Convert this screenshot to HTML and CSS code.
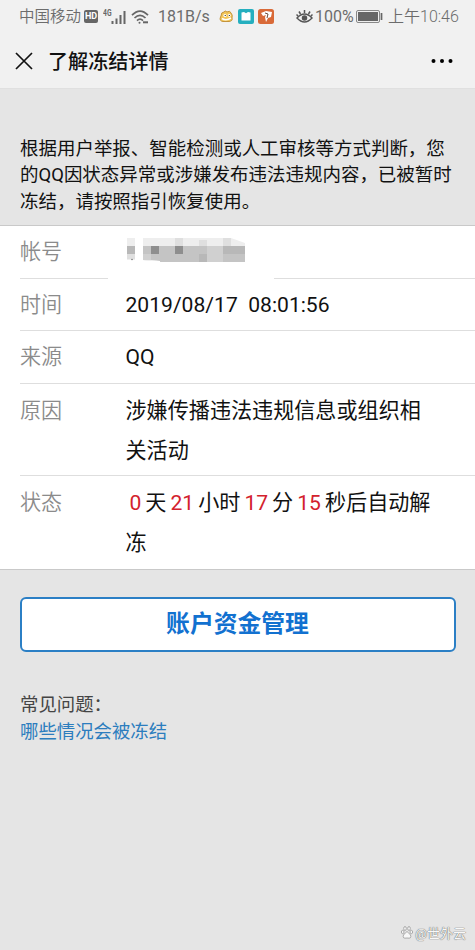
FILE: index.html
```html
<!DOCTYPE html>
<html lang="zh-CN">
<head>
<meta charset="utf-8">
<title>了解冻结详情</title>
<link rel="stylesheet" href="styles.css">
</head>
<body>
<header class="top">
  <div class="status">
    <span class="carrier">中国移动</span>
    <span class="hd">HD</span>
    <svg class="signal" width="26" height="18" viewBox="0 0 26 18"><text x="0" y="7.5" font-size="9" font-weight="700" textLength="8.5" lengthAdjust="spacingAndGlyphs">4G</text><path d="M9.500 13v3M13.500 10.500v5.500M17.500 7v9M21.500 3v13" stroke="#666" stroke-width="2"/></svg>
    <svg class="wifi" width="18" height="16" viewBox="0 0 18 16" fill="none" stroke="#666" stroke-width="1.700"><path d="M1 6.200Q9-2 17 6.200M3.500 9Q9 3.500 14.500 9M6 11.700Q9 8.700 12 11.700"/><circle cx="8.500" cy="13.700" r="1" fill="#666" stroke="none"/><path d="M12 13.300h5" stroke-width="2"/></svg>
    <span class="speed">181B/s</span>
    <svg class="apps" width="56" height="17" viewBox="0 0 56 17">
      <path d="M2 8Q2 4 5 4Q6 2 8 4Q11 2 12 5Q14 7 13 10Q14 13 10 13.500H4Q0 13 1.500 9Z" fill="#f2c65a" stroke="#c4933a"/>
      <circle cx="6" cy="7.500" r="1.600" fill="#fff"/><circle cx="10.300" cy="7.500" r="1.400" fill="#fff"/><path d="M3 10.500Q7 13 12 10" stroke="#fff" fill="none" stroke-width="1.500"/><circle cx="6.200" cy="7.500" r=".6"/><circle cx="10.300" cy="7.500" r=".6"/>
      <rect x="19" y="1" width="16" height="15" rx="2" fill="#25afbf"/><path d="M22.500 4.500l2.500-.5 2 1.200L29 4l2.500.5v8h-9Z" fill="#fff"/>
      <rect x="39" y="1" width="16" height="15" rx="2.500" fill="#d96a38"/><path d="M42 5l5-2 6 1-1 5-3 1-2 4-1-5 1-2-3 1Z" fill="#fff"/><path d="M46 5l3 1-1 4" stroke="#6c4938" fill="none"/>
    </svg>
    <svg class="eye" width="17" height="16" viewBox="0 0 17 16" fill="none" stroke="#555" stroke-width="1.500"><path d="M1 9Q8.500 1 16 9Q8.500 17 1 9ZM8.500 4V1M4.500 5L3 2.500M12.500 5L14 2.500M2 7L.500 5.500M15 7l1.500-1.500"/><circle cx="8.500" cy="9" r="2" fill="#555"/></svg>
    <span class="percent">100%</span>
    <svg class="battery" width="27" height="14" viewBox="0 0 27 14"><rect x=".5" y=".5" width="23" height="12" rx="1.500" fill="#eee" stroke="#888"/><rect x="2" y="2" width="20" height="9" fill="#666"/><path d="M25.500 3v7" stroke="#666" stroke-width="1.700"/></svg>
    <span class="clock">上午10:46</span>
  </div>
  <div class="nav">
    <svg class="close" width="18" height="18" viewBox="0 0 18 18"><path d="M1 1l16 16M17 1L1 17" stroke="#111" stroke-width="1.700"/></svg>
    <h1>了解冻结详情</h1>
    <svg class="more" width="22" height="6" viewBox="0 0 22 6"><circle cx="2.500" cy="3" r="2"/><circle cx="11" cy="3" r="2"/><circle cx="19.500" cy="3" r="2"/></svg>
  </div>
</header>
<main>
  <p class="notice">根据用户举报、智能检测或人工审核等方式判断，您<br>的QQ因状态异常或涉嫌发布违法违规内容，已被暂时<br>冻结，请按照指引恢复使用。</p>
  <dl class="details">
    <div class="row account"><dt>帐号</dt><dd>
      <svg class="mosaic" width="120" height="24" viewBox="0 0 120 24"><path fill="#eee" d="M1 0h8v22H1zM17 0h88l14 5v3H17z"/><path fill="#dfdfdf" d="M49 0h8v8h-8zM73 2h8v6h-8zM97 0h8v8h-8zM1 16h8v5H1z"/><path fill="#c4c4c4" d="M17 8h102v16H35l-18-2z"/><path fill="#b8b8b8" d="M1 8h8v8H1zM97 8h22v8H97zM73 16h8v8h-8z"/><path fill="#8e8e8e" d="M25 8h8v8h-8zM49 8h8v8h-8z"/><path fill="#d0d0d0" d="M81 8h16v16H81zM17 16h8v6h-8z"/><path d="M17 23Q26 21.500 34 23v1H17Z" fill="#fff"/><circle cx="6" cy="21.500" r=".8" fill="#777"/></svg>
    </dd></div>
    <div class="row"><dt>时间</dt><dd class="date">2019/08/17&nbsp; 08:01:56</dd></div>
    <div class="row"><dt>来源</dt><dd>QQ</dd></div>
    <div class="row tall"><dt>原因</dt><dd>涉嫌传播违法违规信息或组织相<br>关活动</dd></div>
    <div class="row tall"><dt>状态</dt><dd><b>0</b>天<b>21</b>小时<b>17</b>分<b>15</b>秒后自动解<br>冻</dd></div>
  </dl>
  <button class="funds">账户资金管理</button>
  <section class="faq"><p>常见问题：</p><a>哪些情况会被冻结</a></section>
</main>
<footer class="mark"><svg width="12" height="13" viewBox="0 0 12 13" fill="#f7f7f7" stroke="#999" stroke-width=".8"><ellipse cx="4" cy="2.500" rx="1.300" ry="2"/><ellipse cx="8" cy="2.500" rx="1.300" ry="2"/><ellipse cx="1.700" cy="6" rx="1.300" ry="1.700"/><ellipse cx="10.300" cy="6" rx="1.300" ry="1.700"/><path d="M6 5.500Q7 6 9.500 9Q11 13 6 12Q1 13 2.500 9Q5 6 6 5.500Z"/></svg><span>@世外云</span></footer>
</body>
</html>
```
FILE: styles.css
```css
* { box-sizing: border-box; }
body {
  margin: 0;
  height: 950px;
  display: flex;
  flex-direction: column;
  overflow: hidden;
  background: #e5e5e5;
  color: #111;
  font-family: Roboto, "Noto Sans CJK SC", sans-serif;
}
p, h1, dl, dd { margin: 0; }
svg { display: block; flex: none; }
.top { height: 89px; background: #f1f1f1; border-bottom: 1px solid #e0e0e0; }
.status {
  height: 33px;
  display: flex;
  align-items: center;
  padding-left: 19px;
  color: #6c6c6c;
  font-size: 16px;
  white-space: nowrap;
}
.carrier { width: 65px; font-size: 15.5px; line-height: 20px; font-weight: 350; }
.hd {
  width: 14px; height: 13px;
  border-radius: 2px;
  background: #666;
  color: #fff;
  font-size: 9px; font-weight: 700; line-height: 13px;
  text-align: center;
}
.signal { margin-left: 5px; fill: #666; }
.wifi { margin-left: 2px; }
.speed { margin-left: 9px; width: 52px; }
.apps { margin-left: 9px; }
.eye { margin-left: 21px; }
.percent { margin-left: 2px; width: 39px; }
.battery { margin-left: 2px; }
.clock { margin-left: 5px; line-height: 20px; font-weight: 350; }
.nav { height: 55px; display: flex; align-items: center; padding: 0 22px 0 15px; }
.nav h1 { margin-left: 15px; padding-top: 2px; font-size: 20.1px; font-weight: 500; line-height: 30px; }
.more { margin-left: auto; }
.notice {
  height: 136px;
  padding: 46.5px 0 0 20px;
  font-size: 18.48px;
  line-height: 26.5px;
  white-space: nowrap;
}
.details { background: #fff; border-top: 1px solid #c9c9c9; border-bottom: 1px solid #c9c9c9; padding-bottom: 1px; }
.row {
  display: flex;
  margin-left: 20px;
  padding: 6px 0 6.2px;
  border-bottom: 1px solid #dedede;
  font-size: 21.1px;
  line-height: 39.5px;
  white-space: nowrap;
}
.row.tall { padding: 7px 0 5.2px; }
.row:last-child { border: 0; padding-bottom: 6px; }
.row.account {
  height: 52.7px;
  border-bottom: 0;
  background: linear-gradient(to right, #dedede 88px, transparent 88px 254px, #dedede 254px) left bottom / 100% 1px no-repeat;
}
dt { width: 105.5px; color: #8b8b8b; font-weight: 350; }
.account dd { padding-top: 6px; }
b { margin: 0 4px; color: #d3222d; font-weight: 400; }
.funds {
  display: block;
  width: 436px; height: 55px;
  margin: 27px 0 0 19.5px;
  padding: 0;
  border: 2px solid #2b7fc5;
  border-radius: 6px;
  background: #fff;
  color: #1271d0;
  font: 700 23.8px/51px Roboto, "Noto Sans CJK SC", sans-serif;
}
.faq { margin: 40px 0 0 20px; font-size: 18.4px; line-height: 26.5px; color: #444; }
.faq a { color: #2c7dbe; }
.mark {
  display: flex;
  align-items: center;
  gap: 2px;
  margin: auto 9px 8px auto;
  color: #f8f8f8;
  font-size: 13px;
  text-shadow: 0 0 1px #555, 0 0 1px #777;
}
```
